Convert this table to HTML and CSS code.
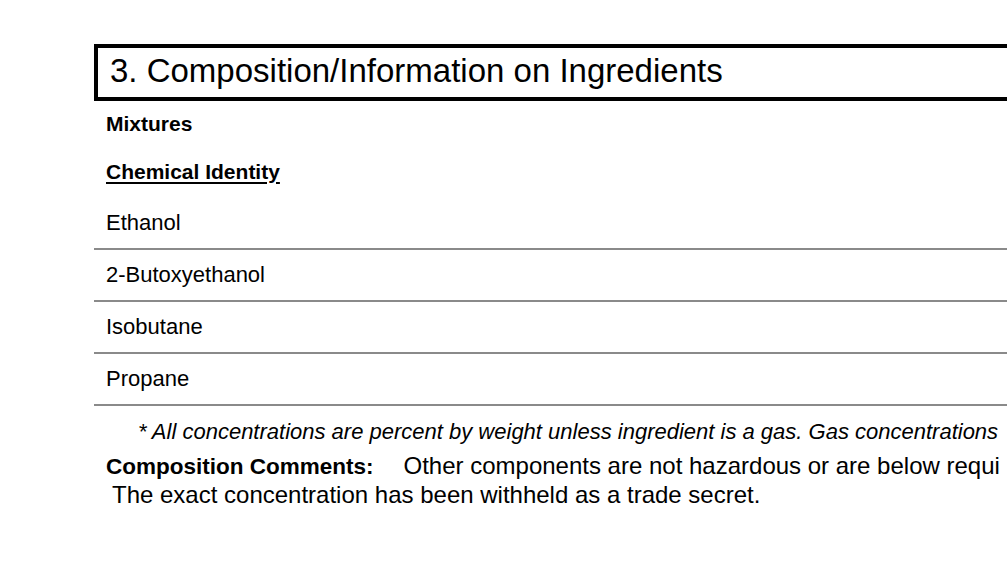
FILE: index.html
```html
<!DOCTYPE html>
<html>
<head>
<meta charset="utf-8">
<link rel="stylesheet" href="styles.css">
</head>
<body>
<div class="page">
  <div class="section-title">3. Composition/Information on Ingredients</div>
  <div class="label label-first">Mixtures</div>
  <div class="label underline">Chemical Identity</div>
  <div class="table">
    <div class="row">Ethanol</div>
    <div class="row">2-Butoxyethanol</div>
    <div class="row">Isobutane</div>
    <div class="row">Propane</div>
  </div>
  <div class="footnote">* All concentrations are percent by weight unless ingredient is a gas. Gas concentrations</div>
  <div class="comments"><span class="comments-label">Composition Comments:</span><span class="comments-text">Other components are not hazardous or are below requi</span></div>
  <div class="comments-line2">The exact concentration has been withheld as a trade secret.</div>
</div>
</body>
</html>
```
FILE: styles.css
```css
html, body {
  margin: 0;
  padding: 0;
  background: #fff;
  overflow: hidden;
}
body {
  font-family: "Liberation Sans", Arial, sans-serif;
  color: #000;
}
.page {
  width: 1400px;
  padding: 44px 0 0 94px;
}
.section-title {
  border-top: 4px solid #000;
  border-left: 4px solid #000;
  border-bottom: 4px solid #000;
  height: 49px;
  line-height: 46px;
  font-size: 33px;
  padding-left: 12px;
  white-space: nowrap;
}
.label {
  font-weight: bold;
  font-size: 21px;
  padding-left: 12px;
  line-height: 24px;
  white-space: nowrap;
}
.label-first {
  margin-top: 11px;
}
.underline {
  text-decoration: underline;
  text-underline-offset: 3px;
  margin-top: 24px;
}
.table {
  margin-top: 13px;
}
.row {
  height: 50px;
  line-height: 50px;
  font-size: 22px;
  padding-left: 12px;
  border-bottom: 2px solid #8a8a8a;
  white-space: nowrap;
}
.row:first-child {
  height: 51px;
  line-height: 51px;
}
.footnote {
  font-style: italic;
  font-size: 22px;
  padding-left: 44px;
  margin-top: 14px;
  line-height: 24px;
  white-space: nowrap;
}
.comments {
  font-size: 24px;
  padding-left: 12px;
  margin-top: 8px;
  line-height: 28px;
  white-space: nowrap;
}
.comments-label {
  font-weight: bold;
  font-size: 22.5px;
  margin-right: 30px;
}
.comments-line2 {
  font-size: 24px;
  padding-left: 18px;
  line-height: 28px;
  white-space: nowrap;
}
```
